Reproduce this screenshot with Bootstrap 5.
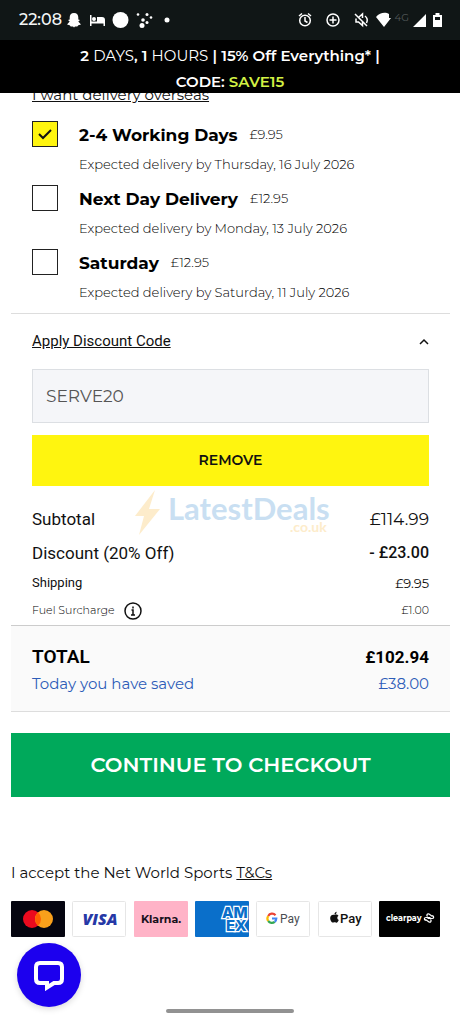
<!DOCTYPE html>
<html lang="en">
<head>
<meta charset="utf-8">
<meta name="viewport" content="width=device-width, initial-scale=1">
<title>Checkout</title>
<link href="https://cdn.jsdelivr.net/npm/bootstrap@5.3.0/dist/css/bootstrap.min.css" rel="stylesheet">
<style>
  body { font-family: Montserrat, Inter, "Liberation Sans", sans-serif; color: #111; background: #fff; font-size: 13px; }
  a { color: inherit; }
  .font-alt { font-family: Roboto, "Liberation Sans", sans-serif; }
  .status-bar { height: 40px; background: #101616; color: #f4f6f6; padding: 0 17px 0 19px; }
  .status-time { font-size: 16px; line-height: 20px; font-weight: 500; }
  .status-net { font-size: 10px; line-height: 16px; color: #555b5b; align-self: flex-start; }
  .promo { background: #000; color: #fff; font-size: 15px; line-height: 26px; height: 53px; padding-top: 3px; font-weight: 600; }
  .promo span { font-weight: 400; }
  .promo .promo-code { color: #d3f244; font-weight: 600; }
  .overseas { height: 12px; overflow: hidden; font-size: 15px; line-height: 20px; padding: 0 32px; }
  .options { padding: 12px 32px 4px; }
  .option { height: 64px; gap: 21px; }
  .option .form-check-input { width: 26px; height: 26px; margin: 4px 0 0; border: 1px solid #222; border-radius: 0; background-color: #fff; flex: none; }
  .option .form-check-input:checked { background-color: #fff50f; background-size: 20px;
    background-image: url("data:image/svg+xml,%3csvg xmlns='http://www.w3.org/2000/svg' viewBox='0 0 20 20'%3e%3cpath fill='none' stroke='%23111' stroke-width='2' d='M4 10l4 4 8-8'/%3e%3c/svg%3e"); }
  .option-name { font-size: 17px; line-height: 36px; font-weight: 700; color: #000; margin-right: 12px; }
  .option-note { font-size: 13px; line-height: 22px; }
  .price-light { font-weight: 300; color: #000; }
  .panel { margin: 0 10px 0 11px; border-top: 1px solid #ddd; padding: 0 21px; }
  .discount-toggle { height: 55px; border: 0; background: none; padding: 0; font-size: 15px; color: #111; }
  .code-box { height: 54px; border: 1px solid #dcdfe3; border-radius: 0; background: #f5f6f9; color: #555; font-size: 17px; padding: 0 13px; }
  .btn-remove { height: 51px; border: 0; border-radius: 0; background: #fff50f; color: #111; font-size: 14px; font-weight: 600; margin-top: 12px; }
  .summary { padding: 16px 0 0; }
  .sum-main { font-size: 17px; line-height: 34px; }
  .sum-main .sum-less { font-size: 16px; font-weight: 500; }
  .sum-ship { font-size: 13px; line-height: 26px; }
  .sum-fuel { font-size: 11px; line-height: 29px; }
  .watermark { left: 102px; top: 3px; pointer-events: none; }
  .wm-name { fill: #c9dff2; font: 700 31px Lato, sans-serif; }
  .wm-dom { fill: #fdeccb; font: 700 14px Lato, sans-serif; }
  .totals { margin: 0 10px 0 11px; padding: 17px 21px 14px; background: #fafafa; border-top: 1px solid #ccc; border-bottom: 1px solid #ddd; }
  .total-line { font-size: 17px; line-height: 28px; font-weight: 700; color: #000; }
  .total-line .total-name { font-size: 19px; font-weight: 600; }
  .saved-line { font-size: 15px; line-height: 26px; color: #2d5cb8; }
  .btn-checkout { height: 64px; border: 0; border-radius: 0; background: #00a95b; color: #fff; font-size: 21px; font-weight: 600; }
  .checkout-wrap { padding: 21px 10px 0 11px; }
  .terms { padding: 64px 11px 0; font-size: 15px; line-height: 24px; }
  .pay-row { padding: 16px 20px 0 11px; }
  .pay-row svg { width: 54px; height: 36px; flex: none; display: block; }
  .pay-row .pay-wide { width: 61px; }
  .chat-btn { width: 64px; height: 64px; border: 0; background: #1c00ee; margin: 6px 0 0 17px; padding: 0; box-shadow: 0 2px 6px rgba(0,0,0,.15); }
  .home-bar { width: 128px; height: 4px; background: #929292; margin: 2px auto 11px; }
</style>
</head>
<body>
<header>
  <div class="status-bar d-flex align-items-center justify-content-between">
    <div class="d-flex align-items-center">
      <span class="status-time">22:08</span>
      <svg class="ms-1" width="112" height="20" viewBox="0 0 112 20" fill="#fff" aria-hidden="true">
        <path d="M8 3c3 0 4.300 2 4.300 4.500v2l1.700.5-1.700 1.500 2.700 3-2.700.700-1 1.300H9l-1 1-1-1H4.700l-1-1.300L1 14.500l2.700-3L2 10l1.700-.5v-2C3.700 5 5 3 8 3z"/>
        <path d="M24 5h1.500v6.500H31V7h5c2 0 3 1 3 3v6h-1.500v-2.500h-12V16H24zM28 7a2 2 0 1 1 0 4 2 2 0 0 1 0-4z"/>
        <circle cx="54.500" cy="10" r="8"/>
        <circle cx="77" cy="10" r="1.800"/><circle cx="72" cy="4.500" r="1.300"/><circle cx="81" cy="4.500" r="1.500"/><circle cx="76" cy="15.500" r="2.500"/><circle cx="81" cy="12.500" r="1.500"/><circle cx="85" cy="7.500" r="1.300"/>
        <circle cx="101" cy="10" r="2.500"/>
      </svg>
    </div>
    <div class="d-flex align-items-center">
      <svg width="94" height="20" viewBox="0 0 94 20" fill="none" stroke="#fff" stroke-width="1.500" aria-hidden="true">
        <circle cx="8" cy="10.500" r="5.300"/><path d="M8 7v4l2.500 1.500M2 6l3-2.500M14 6l-3-2.500"/>
        <circle cx="36" cy="10" r="6"/><path d="M36 6.500v7M32.500 10h7"/>
        <path d="M58 4l12 12M59 8.500v3.500h2.500l4 3.500V11M62 7l3.500-3v4M68 6c2.500 2 2.500 5 1.500 7"/>
        <path fill="#fff" stroke="none" d="M79 7c4-5 10-5 13-3v4h2l-7 9z"/>
      </svg>
      <span class="status-net mx-1">4G</span>
      <svg width="30" height="20" viewBox="0 0 30 20" fill="#fff" aria-hidden="true">
        <path d="M13 4v13H0zM20 5h2.500V3h4v2H29v12h-9z"/><path fill="#101616" d="M22 7h5v3h-5z"/>
      </svg>
    </div>
  </div>
  <div class="promo text-center">
    <div>2 <span>DAYS</span>, 1 <span>HOURS</span> | 15% Off Everything* |</div>
    <div>CODE: <span class="promo-code">SAVE15</span></div>
  </div>
</header>

<main>
  <div class="overseas d-flex align-items-end"><a href="#">I want delivery overseas</a></div>

  <div class="options">
    <div class="option d-flex">
      <input class="form-check-input" type="checkbox" id="ship-std" checked>
      <label for="ship-std">
        <span class="d-flex align-items-center"><span class="option-name">2-4 Working Days</span><span class="price-light">£9.95</span></span>
        <span class="option-note d-block price-light">Expected delivery by Thursday, 16 July 2026</span>
      </label>
    </div>
    <div class="option d-flex">
      <input class="form-check-input" type="checkbox" id="ship-next">
      <label for="ship-next">
        <span class="d-flex align-items-center"><span class="option-name">Next Day Delivery</span><span class="price-light">£12.95</span></span>
        <span class="option-note d-block price-light">Expected delivery by Monday, 13 July 2026</span>
      </label>
    </div>
    <div class="option d-flex">
      <input class="form-check-input" type="checkbox" id="ship-sat">
      <label for="ship-sat">
        <span class="d-flex align-items-center"><span class="option-name">Saturday</span><span class="price-light">£12.95</span></span>
        <span class="option-note d-block price-light">Expected delivery by Saturday, 11 July 2026</span>
      </label>
    </div>
  </div>

  <section class="panel">
    <button class="discount-toggle font-alt w-100 d-flex align-items-center justify-content-between" type="button" aria-expanded="true">
      <span class="text-decoration-underline">Apply Discount Code</span>
      <svg width="10" height="8" viewBox="0 0 10 8" fill="none" stroke="#111" stroke-width="1.500" aria-hidden="true"><path d="M1 6l4-4 4 4"/></svg>
    </button>
    <input class="code-box form-control" type="text" value="SERVE20" aria-label="Discount code">
    <button class="btn-remove btn w-100" type="button">REMOVE</button>

    <div class="summary position-relative">
      <svg class="watermark position-absolute" width="200" height="48" viewBox="0 0 200 48" role="img" aria-label="LatestDeals.co.uk">
        <path fill="#fdeccb" d="M21 1L1 27h9L5 46l21-26H15z"/>
        <text class="wm-name" x="34" y="31">LatestDeals</text>
        <text class="wm-dom" x="156" y="43">.co.uk</text>
      </svg>
      <div class="position-relative">
        <div class="sum-main d-flex justify-content-between"><span class="font-alt">Subtotal</span><span>£114.99</span></div>
        <div class="sum-main font-alt d-flex justify-content-between"><span>Discount (20% Off)</span><span class="sum-less">- £23.00</span></div>
        <div class="sum-ship d-flex justify-content-between"><span class="font-alt">Shipping</span><span>£9.95</span></div>
        <div class="sum-fuel d-flex justify-content-between">
          <span class="d-flex align-items-center price-light">Fuel Surcharge
            <svg class="ms-2" width="20" height="20" viewBox="0 0 20 20" fill="none" stroke="#111" stroke-width="1.500" role="img" aria-label="About the surcharge"><circle cx="10" cy="10" r="8"/><path d="M8.500 9H10v5M8 14h4M10 5.500v2"/></svg>
          </span>
          <span class="price-light">£1.00</span>
        </div>
      </div>
    </div>
  </section>

  <section class="totals">
    <div class="total-line font-alt d-flex justify-content-between"><span class="total-name">TOTAL</span><span>£102.94</span></div>
    <div class="saved-line d-flex justify-content-between"><span>Today you have saved</span><span>£38.00</span></div>
  </section>

  <div class="checkout-wrap"><button class="btn-checkout btn w-100" type="button">CONTINUE TO CHECKOUT</button></div>

  <div class="terms">I accept the Net World Sports <a href="#">T&amp;Cs</a></div>

  <div class="pay-row d-flex justify-content-between">
    <svg viewBox="0 0 54 36" role="img" aria-label="Mastercard"><rect width="54" height="36" rx="1" fill="#050510"/><circle cx="21" cy="18" r="9" fill="#eb0a1e"/><circle cx="33" cy="18" r="9" fill="#f9a01b"/><path d="M27 11.300a9 9 0 0 1 0 13.400 9 9 0 0 1 0-13.400z" fill="#ff5f00"/></svg>
    <svg viewBox="0 0 54 36" role="img" aria-label="Visa"><rect x=".5" y=".5" width="53" height="35" rx="1" fill="#fff" stroke="#e6e6e6"/><text x="28" y="24" text-anchor="middle" font-family="Open Sans, sans-serif" font-size="16" font-weight="800" font-style="italic" fill="#2638a6">VISA</text></svg>
    <svg viewBox="0 0 54 36" role="img" aria-label="Klarna"><rect width="54" height="36" rx="1" fill="#ffb3c7"/><text x="27" y="22" text-anchor="middle" font-family="Montserrat, Inter, sans-serif" font-size="11" font-weight="700" fill="#17111c">Klarna.</text></svg>
    <svg viewBox="0 0 54 36" role="img" aria-label="American Express"><rect width="54" height="36" rx="1" fill="#0a6fca"/><g font-family="Inter, sans-serif" font-size="15" font-weight="800" fill="#0a6fca" stroke="#fff" stroke-width="2.500" paint-order="stroke"><text x="27" y="17">AM</text><text x="31" y="30">EX</text></g></svg>
    <svg viewBox="0 0 54 36" role="img" aria-label="Google Pay"><rect x=".5" y=".5" width="53" height="35" rx="1" fill="#fff" stroke="#e6e6e6"/><g fill="none" stroke-width="2.200"><path d="M19.500 14.200A4.500 4.500 0 0 0 12.200 15" stroke="#ea4335"/><path d="M12.200 15a4.500 4.500 0 0 0 0 5" stroke="#fbbc04"/><path d="M12.200 20a4.500 4.500 0 0 0 6.500.8" stroke="#34a853"/><path d="M18.700 20.800a4.500 4.500 0 0 0 1.600-3.300H16" stroke="#4285f4"/></g><text x="24" y="22" font-family="Roboto, sans-serif" font-size="12" fill="#4a4d52">Pay</text></svg>
    <svg viewBox="0 0 54 36" role="img" aria-label="Apple Pay"><rect x=".5" y=".5" width="53" height="35" rx="1" fill="#fff" stroke="#e6e6e6"/><path d="M16.500 14c1-.6 3-.8 4 .8-1.800 1.200-1.500 3.500.3 4.300-.8 2-2 3-3 2.400-.8-.4-1.500-.4-2.300 0-1.600.6-3.500-2.500-3.300-4.800.2-2.400 2.300-3.500 4.300-2.700zM16.400 13.500c0-1.500 1-2.500 2.200-2.800.1 1.500-.8 2.700-2.200 2.800z" fill="#111"/><text x="22" y="22" font-family="Roboto, sans-serif" font-size="13" font-weight="500" fill="#111">Pay</text></svg>
    <svg class="pay-wide" viewBox="0 0 61 36" role="img" aria-label="Clearpay"><rect width="61" height="36" rx="1" fill="#000"/><text x="7" y="20" font-family="Montserrat, Inter, sans-serif" font-size="8" font-weight="700" fill="#fff">clearpay</text><path d="M47 19.500c-2.500-.5-2-3 0-3h4.500M46.500 18.500l3.500 2.500c1.500.8 3-1 1.500-2.500M53 14.500c2.500.5 2 3 0 3h-4.500M53.500 15.500L50 13c-1.500-.8-3 1-1.500 2.500" fill="none" stroke="#fff" stroke-width="1.200"/></svg>
  </div>
</main>

<footer>
  <button class="chat-btn rounded-circle d-flex align-items-center justify-content-center" type="button" aria-label="Open chat">
    <svg width="32" height="32" viewBox="0 0 32 32" fill="none" stroke="#fff" stroke-width="4" aria-hidden="true"><path d="M7 4h18q4 0 4 4v12q0 4-4 4h-4l-7 4.500V24H7q-4 0-4-4V8q0-4 4-4z"/></svg>
  </button>
  <div class="home-bar rounded-pill"></div>
</footer>
<script src="https://cdn.jsdelivr.net/npm/bootstrap@5.3.0/dist/js/bootstrap.bundle.min.js"></script>
</body>
</html>
